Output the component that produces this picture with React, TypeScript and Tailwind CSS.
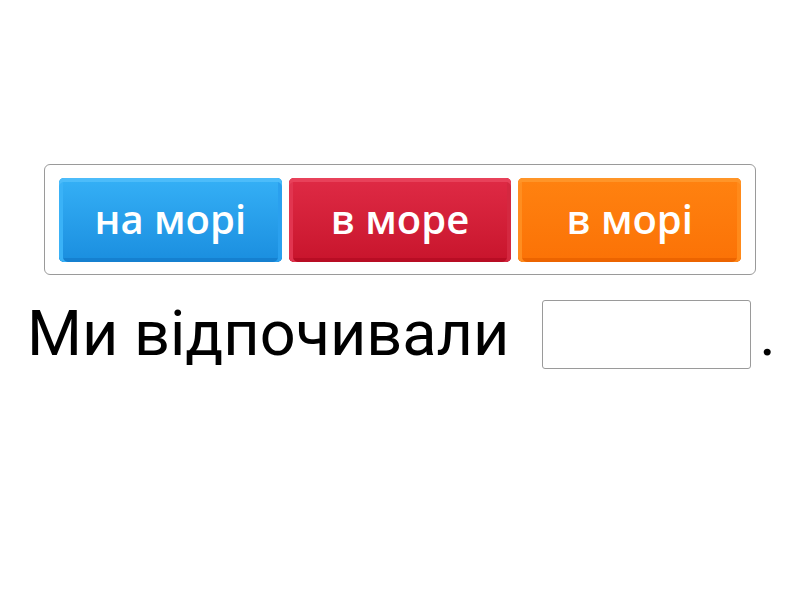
import React from "react";

const btn =
  "flex-1 h-[84px] rounded-[5px] flex items-center justify-center text-white text-[40px] font-semibold leading-none pb-[3px]";

export default function App() {
  return (
    <div
      className="w-[800px] h-[600px] bg-white flex flex-col items-center pt-[164px]"
      style={{ fontFamily: "Roboto, 'Noto Sans', sans-serif" }}
    >
      <div className="w-[712px] h-[111px] border border-[#9a9a9a] rounded-[6px] px-[14px] pt-[13px] flex gap-[7px]">
        <div
          style={{ fontFamily: "'Open Sans', Roboto, sans-serif" }}
          className={`${btn} bg-gradient-to-b from-[#35b0f6] to-[#1a8edf] shadow-[inset_0_4px_0_#4cbcfa,inset_4px_0_0_#3ab2f7,inset_-4px_0_0_#2aa0ee,inset_0_-4px_0_#1580d0]`}
        >
          на морі
        </div>
        <div
          style={{ fontFamily: "'Open Sans', Roboto, sans-serif" }}
          className={`${btn} bg-gradient-to-b from-[#df2a45] to-[#c8142c] shadow-[inset_0_4px_0_#e8415a,inset_4px_0_0_#e13550,inset_-4px_0_0_#d42840,inset_0_-4px_0_#b80d24]`}
        >
          в море
        </div>
        <div
          style={{ fontFamily: "'Open Sans', Roboto, sans-serif" }}
          className={`${btn} bg-gradient-to-b from-[#ff8210] to-[#fb7206] shadow-[inset_0_4px_0_#ff9528,inset_4px_0_0_#ff8e20,inset_-4px_0_0_#ff8a1a,inset_0_-4px_0_#ec6400]`}
        >
          в морі
        </div>
      </div>
      <div className="w-[800px] flex items-start mt-[25px] pl-[27px]">
        <span className="text-[63px] leading-[68px] text-black whitespace-nowrap">
          Ми відпочивали
        </span>
        <div className="ml-[33px] w-[209px] h-[69px] border border-[#9a9a9a] rounded-[3px]" />
        <span className="text-[63px] leading-[68px] text-black ml-[8px]">.</span>
      </div>
    </div>
  );
}
